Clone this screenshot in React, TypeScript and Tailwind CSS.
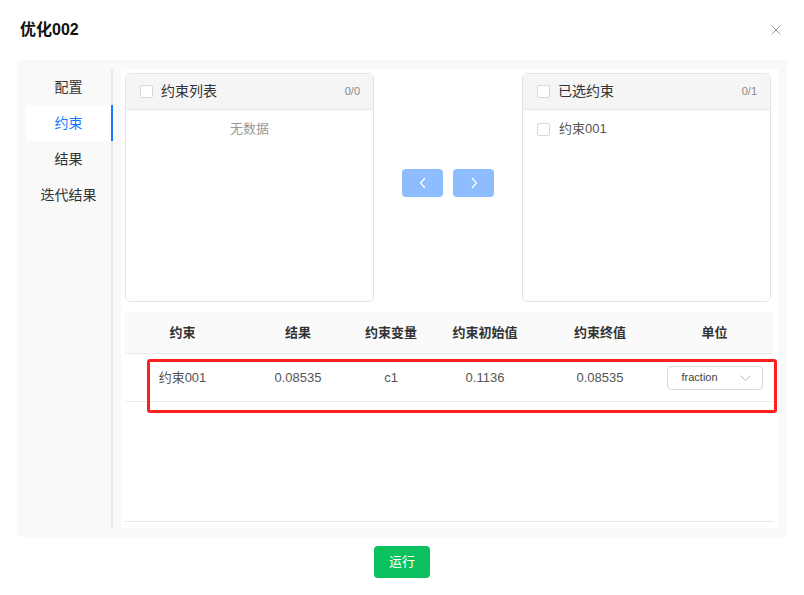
const FONT = "font-['Liberation_Sans','Noto_Sans_CJK_SC',sans-serif]";

function Checkbox() {
  return <span className="inline-block h-[13px] w-[13px] shrink-0 rounded-[2px] border border-[#d9d9d9] bg-white" />;
}

function TransferBox({ title, count, children }: { title: string; count: string; children?: React.ReactNode }) {
  return (
    <div className="flex w-[249px] flex-col overflow-hidden rounded-[6px] border border-[#e3e3e3]">
      <div className="flex h-[36px] shrink-0 items-center border-b border-[#e8e8e8] bg-[#f5f5f5] pl-[14px] pr-[13px]">
        <Checkbox />
        <span className="ml-2 text-[14px] text-[#333]">{title}</span>
        <span className="ml-auto text-[11px] text-[#888]">{count}</span>
      </div>
      <div className="flex-1 bg-white">{children}</div>
    </div>
  );
}

function ArrowButton({ dir }: { dir: "left" | "right" }) {
  return (
    <button className="flex h-[28px] w-[41px] items-center justify-center rounded-[4px] bg-[#8dbcff]">
      <svg width="8" height="12" viewBox="0 0 8 12" fill="none" stroke="white" strokeWidth="1.3">
        {dir === "left" ? <path d="M6 1 1.5 6 6 11" /> : <path d="M2 1 6.5 6 2 11" />}
      </svg>
    </button>
  );
}

const menu = ["配置", "约束", "结果", "迭代结果"];
const columns = ["约束", "结果", "约束变量", "约束初始值", "约束终值", "单位"];
const row = ["约束001", "0.08535", "c1", "0.1136", "0.08535"];

export default function App() {
  return (
    <div className={`relative h-[595px] w-[804px] bg-white ${FONT}`}>
      <div className="flex h-[60px] items-center justify-between pl-5 pr-[23px]">
        <h1 className="text-[16px] font-bold text-[#111]">优化002</h1>
        <svg width="10" height="10" viewBox="0 0 10 10" stroke="#999" strokeWidth="1">
          <path d="M0.5 0.5 9.5 9.5M9.5 0.5 0.5 9.5" />
        </svg>
      </div>

      <div className="mx-[17px] flex h-[477px] rounded-[4px] bg-[#f9f9f9] py-[9px] pr-[9px]">
        <div className="w-[96px] border-r-2 border-[#e6e6e6] pl-[9px]">
          {menu.map((m) => (
            <div
              key={m}
              className={
                m === "约束"
                  ? "-mr-[2px] flex h-[36px] items-center justify-center border-r-2 border-[#1677ff] bg-white text-[14px] text-[#1677ff]"
                  : "flex h-[36px] items-center justify-center text-[14px] text-[#333]"
              }
            >
              {m}
            </div>
          ))}
        </div>

        <div className="ml-2 flex-1 bg-white pl-1 pt-1">
          <div className="flex h-[229px] w-[646px]">
            <TransferBox title="约束列表" count="0/0">
              <div className="pt-[9px] text-center text-[13px] leading-[20px] text-[#999]">无数据</div>
            </TransferBox>
            <div className="flex flex-1 justify-center gap-[10px] pt-[96px]">
              <ArrowButton dir="left" />
              <ArrowButton dir="right" />
            </div>
            <TransferBox title="已选约束" count="0/1">
              <div className="flex h-[18px] items-center gap-[9px] pl-[14px] pt-0 mt-[10px]">
                <Checkbox />
                <span className="text-[13px] text-[#555]">约束001</span>
              </div>
            </TransferBox>
          </div>

          <div className="mt-[10px] w-[648px] border-b border-[#e6e6e6]">
            <div className="grid h-[42px] grid-cols-[115px_116px_70px_118px_112px_117px] items-center border-b border-[#ebebeb] bg-[#fafafa]">
              {columns.map((c) => (
                <div key={c} className="text-center text-[13px] font-bold text-[#333]">
                  {c}
                </div>
              ))}
            </div>
            <div className="grid h-[48px] grid-cols-[115px_116px_70px_118px_112px_117px] items-center border-b border-[#ebebeb]">
              {row.map((v, i) => (
                <div key={i} className="text-center text-[13px] text-[#555]">
                  {v}
                </div>
              ))}
              <div className="flex justify-center">
                <div className="flex h-6 w-[96px] items-center justify-between rounded-[4px] border border-[#d9d9d9] pl-[14px] pr-[11px]">
                  <span className="text-[11px] text-[#444]">fraction</span>
                  <svg width="11" height="6" viewBox="0 0 11 6" fill="none" stroke="#bbb" strokeWidth="1">
                    <path d="M0.5 0.5 5.5 5.5 10.5 0.5" />
                  </svg>
                </div>
              </div>
            </div>
            <div className="h-[119px]" />
          </div>
        </div>
      </div>

      <div className="mt-[9px] flex justify-center">
        <button className="flex h-8 w-[56px] items-center justify-center rounded-[4px] bg-[#0bc15e] text-[13px] text-white">
          运行
        </button>
      </div>

      <div className="pointer-events-none absolute left-[147px] top-[359px] h-[54px] w-[630px] rounded-[3px] border-[3px] border-[#ff1f1f]" />
    </div>
  );
}
